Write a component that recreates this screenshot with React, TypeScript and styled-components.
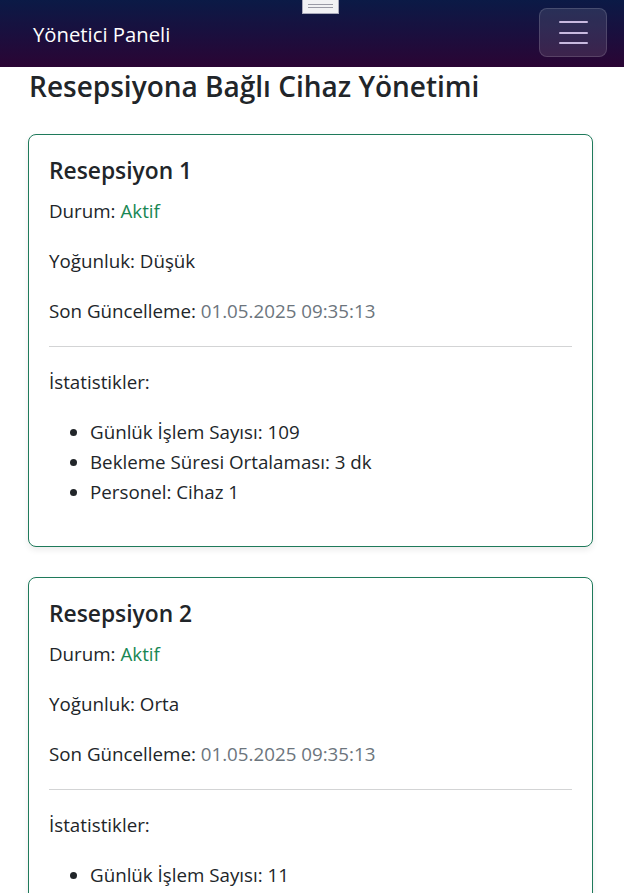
import React from "react";
import styled, { createGlobalStyle } from "styled-components";

const GlobalStyle = createGlobalStyle`
  html, body {
    margin: 0;
    padding: 0;
    background: #ffffff;
  }
  body {
    font-family: "Open Sans", "Noto Sans", sans-serif;
    font-size: 18.75px;
    line-height: 30px;
    color: #212529;
  }
  * { box-sizing: border-box; }
`;

const Navbar = styled.nav`
  position: relative;
  height: 67px;
  display: flex;
  align-items: center;
  justify-content: space-between;
  padding: 8px 17px 10px 33px;
  background: linear-gradient(180deg, #0b1a46 0%, #1a0f3e 50%, #2b0534 100%);
`;

const Brand = styled.span`
  color: #ffffff;
  font-size: 20.3px;
  line-height: 30px;
  padding-top: 3px;
`;

const Toggler = styled.button`
  width: 68px;
  height: 49px;
  display: flex;
  flex-direction: column;
  align-items: center;
  justify-content: center;
  gap: 8.5px;
  padding: 0;
  border-radius: 8px;
  border: 1px solid rgba(255, 255, 255, 0.14);
  background: rgba(255, 255, 255, 0.11);
  cursor: pointer;
`;

const TogglerLine = styled.span`
  display: block;
  width: 29px;
  height: 2px;
  border-radius: 1px;
  background: #c8b9df;
`;

const Handle = styled.div`
  position: absolute;
  top: -1px;
  left: 302px;
  width: 37px;
  height: 15px;
  background: #f1f1f4;
  border: 1px solid #a9a9bb;
  border-top: none;
  display: flex;
  flex-direction: column;
  justify-content: center;
  align-items: center;
  gap: 2px;
  padding-bottom: 1px;
`;

const HandleLine = styled.span`
  display: block;
  width: 25px;
  height: 1px;
  background: #9a9aa6;
`;

const Main = styled.main`
  padding: 2px 31px 0 28px;
`;

const PageTitle = styled.h1`
  margin: 0 0 30px 1px;
  font-size: 28px;
  line-height: 35px;
  font-weight: 600;
  letter-spacing: 0;
  color: #212529;
`;

const Card = styled.section`
  border: 1px solid #1f7a5b;
  border-radius: 8px;
  background: #ffffff;
  box-shadow: 0 3px 6px rgba(0, 0, 0, 0.08);
  padding: 21px 20px 19px;
  margin-bottom: 30px;
`;

const CardTitle = styled.h5`
  margin: 0 0 10px;
  font-size: 22.8px;
  line-height: 30px;
  font-weight: 600;
  letter-spacing: 0;
`;

const Text = styled.p`
  margin: 0 0 20px;
`;

const Status = styled.span<{ $active: boolean }>`
  color: ${(p) => (p.$active ? "#198754" : "#dc3545")};
`;

const Muted = styled.span`
  color: #6c757d;
`;

const Divider = styled.hr`
  margin: 19px 0 20px;
  border: 0;
  border-top: 1px solid #d3d4d5;
`;

const StatList = styled.ul`
  margin: 0 0 20px;
  padding-left: 41px;
`;

const StatItem = styled.li``;

type Reception = {
  name: string;
  active: boolean;
  load: string;
  updated: string;
  ops: number;
  wait: string;
  staff: string;
};

const receptions: Reception[] = [
  { name: "Resepsiyon 1", active: true, load: "Düşük", updated: "01.05.2025 09:35:13", ops: 109, wait: "3 dk", staff: "Cihaz 1" },
  { name: "Resepsiyon 2", active: true, load: "Orta", updated: "01.05.2025 09:35:13", ops: 11, wait: "7 dk", staff: "Cihaz 2" },
];

function ReceptionCard({ r }: { r: Reception }) {
  return (
    <Card>
      <CardTitle>{r.name}</CardTitle>
      <Text>
        Durum: <Status $active={r.active}>{r.active ? "Aktif" : "Pasif"}</Status>
      </Text>
      <Text>Yoğunluk: {r.load}</Text>
      <Text>
        Son Güncelleme: <Muted>{r.updated}</Muted>
      </Text>
      <Divider />
      <Text>İstatistikler:</Text>
      <StatList>
        <StatItem>Günlük İşlem Sayısı: {r.ops}</StatItem>
        <StatItem>Bekleme Süresi Ortalaması: {r.wait}</StatItem>
        <StatItem>Personel: {r.staff}</StatItem>
      </StatList>
    </Card>
  );
}

export default function App() {
  return (
    <>
      <GlobalStyle />
      <Navbar>
        <Handle>
          <HandleLine />
          <HandleLine />
        </Handle>
        <Brand>Yönetici Paneli</Brand>
        <Toggler aria-label="Menü">
          <TogglerLine />
          <TogglerLine />
          <TogglerLine />
        </Toggler>
      </Navbar>
      <Main>
        <PageTitle>Resepsiyona Bağlı Cihaz Yönetimi</PageTitle>
        {receptions.map((r) => (
          <ReceptionCard key={r.name} r={r} />
        ))}
      </Main>
    </>
  );
}
